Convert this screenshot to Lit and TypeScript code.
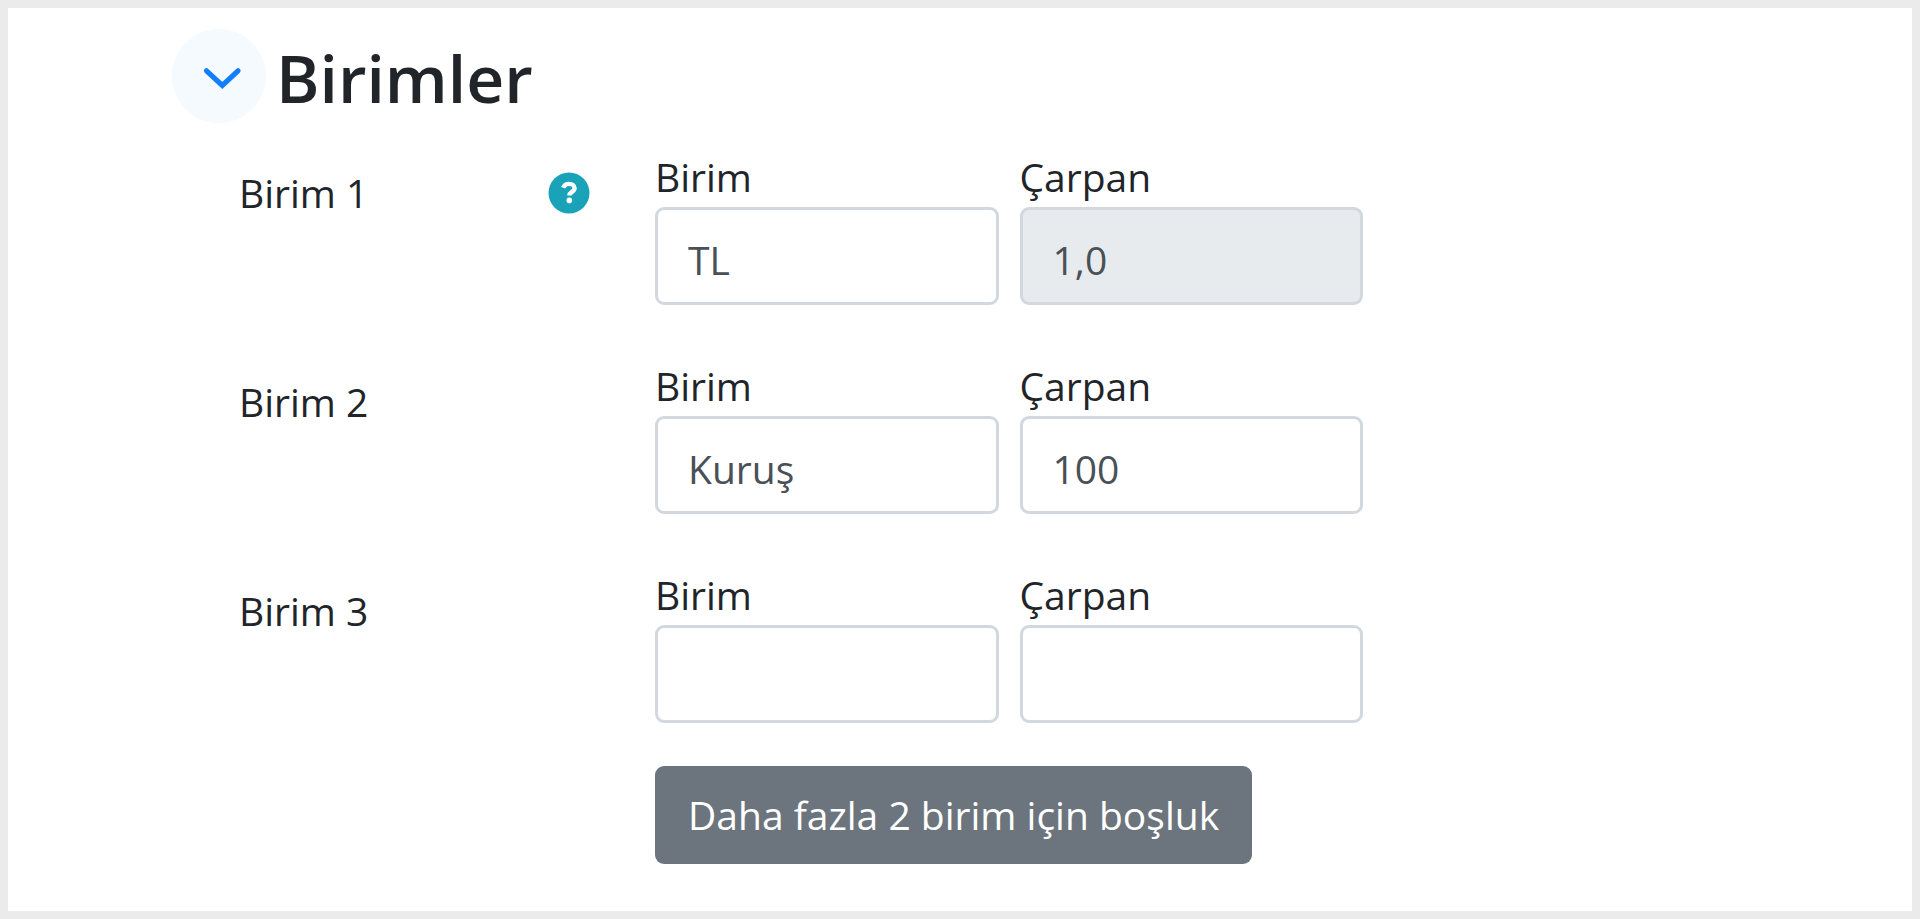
import { LitElement, html, css, nothing } from "lit";
import { customElement, property, state } from "lit/decorators.js";

interface Unit {
  name: string;
  factor: string;
  base?: boolean;
}

@customElement("unit-row")
class UnitRow extends LitElement {
  @property({ type: Number }) index = 1;
  @property({ attribute: false }) unit: Unit = { name: "", factor: "" };

  static styles = css`
    :host {
      display: grid;
      grid-template-columns: minmax(0, 416fr) minmax(0, 708fr);
    }
    .label {
      display: flex;
      align-items: center;
      justify-content: space-between;
      align-self: start;
      padding: 16px 65px 0 0;
    }
    .help {
      display: block;
      width: 42px;
      height: 42px;
      padding: 0;
      border: 0;
      border-radius: 50%;
      background: none;
      cursor: pointer;
    }
    .help svg {
      display: block;
      width: 100%;
      height: 100%;
    }
    .fields {
      display: grid;
      grid-template-columns: 1fr 1fr;
      gap: 21px;
    }
    .field {
      display: block;
      min-width: 0;
    }
    .input {
      display: block;
      box-sizing: border-box;
      width: 100%;
      height: 98px;
      padding: 6px 30px 0;
      border: 3px solid #d3d8de;
      border-radius: 9px;
      background: #fff;
      color: #495057;
      font: inherit;
      outline: none;
    }
    .input:focus {
      border-color: #80bdff;
    }
    .input:disabled {
      background: #e7ebee;
    }
  `;

  render() {
    return html`
      <div class="label">
        <span>Birim ${this.index}</span>
        ${this.unit.base
          ? html`<button class="help" type="button" aria-label="Yardım">
              <svg viewBox="0 0 42 42" aria-hidden="true">
                <circle cx="21" cy="21" r="20.5" fill="#19a2b8" />
                <path
                  d="M15.2 15.8c1-2.7 3-3.9 5.8-3.9 3.200 0 5.600 1.600 5.600 4.300 0 3.600-5.200 3.700-5.200 7.200"
                  fill="none"
                  stroke="#fff"
                  stroke-width="4.400"
                />
                <circle cx="21.3" cy="28.4" r="2.8" fill="#fff" />
              </svg>
            </button>`
          : nothing}
      </div>
      <div class="fields">
        <label class="field">
          Birim
          <input class="input" type="text" .value=${this.unit.name} />
        </label>
        <label class="field">
          Çarpan
          <input
            class="input"
            type="text"
            inputmode="decimal"
            .value=${this.unit.factor}
            ?disabled=${this.unit.base}
          />
        </label>
      </div>
    `;
  }
}

@customElement("app-root")
class AppRoot extends LitElement {
  @state() private open = true;
  @state() private units: Unit[] = [
    { name: "TL", factor: "1,0", base: true },
    { name: "Kuruş", factor: "100" },
    { name: "", factor: "" },
  ];

  static styles = css`
    :host {
      display: block;
      box-sizing: border-box;
      min-height: 100vh;
      padding: 21px 64px 47px 164px;
      border: 8px solid #ebebeb;
      background: #fff;
      color: #212529;
      font: 39px/60px "Open Sans", "Noto Sans", sans-serif;
    }
    .header {
      display: flex;
      align-items: center;
      gap: 10px;
    }
    .toggle {
      flex: none;
      width: 94px;
      height: 94px;
      padding: 0;
      border: 0;
      border-radius: 50%;
      background: #f5faff;
      cursor: pointer;
    }
    .toggle svg {
      display: block;
      width: 100%;
      height: 100%;
    }
    .title {
      margin: 0;
      padding-top: 2px;
      font-size: 66px;
      line-height: 80px;
      font-weight: 600;
    }
    .form {
      display: flex;
      flex-direction: column;
      gap: 51px;
      max-width: 1124px;
      margin: 24px 0 0 67px;
    }
    .actions {
      display: grid;
      grid-template-columns: minmax(0, 416fr) minmax(0, 708fr);
      max-width: 1124px;
      margin: 43px 0 0 67px;
    }
    .more {
      grid-column: 2;
      justify-self: start;
      min-height: 98px;
      padding: 0 33px;
      border: 0;
      border-radius: 9px;
      background: #6c757d;
      color: #fff;
      font: inherit;
      white-space: nowrap;
      cursor: pointer;
    }
  `;

  private addUnits() {
    const blank = () => ({ name: "", factor: "" });
    this.units = [...this.units, blank(), blank()];
  }

  render() {
    return html`
      <header class="header">
        <button
          class="toggle"
          type="button"
          aria-label="Birimler"
          aria-expanded=${this.open ? "true" : "false"}
          @click=${() => (this.open = !this.open)}
        >
          <svg viewBox="0 0 94 94" aria-hidden="true">
            <path
              d="M34.500 41.800 50.300 56.500 66 41.800"
              fill="none"
              stroke="#117fff"
              stroke-width="5.200"
              stroke-linecap="round"
            />
          </svg>
        </button>
        <h1 class="title">Birimler</h1>
      </header>
      ${this.open
        ? html`<div class="form">
              ${this.units.map(
                (unit, i) => html`<unit-row .index=${i + 1} .unit=${unit}></unit-row>`
              )}
            </div>
            <div class="actions">
              <button class="more" type="button" @click=${this.addUnits}>
                Daha fazla 2 birim için boşluk
              </button>
            </div>`
        : nothing}
    `;
  }
}
